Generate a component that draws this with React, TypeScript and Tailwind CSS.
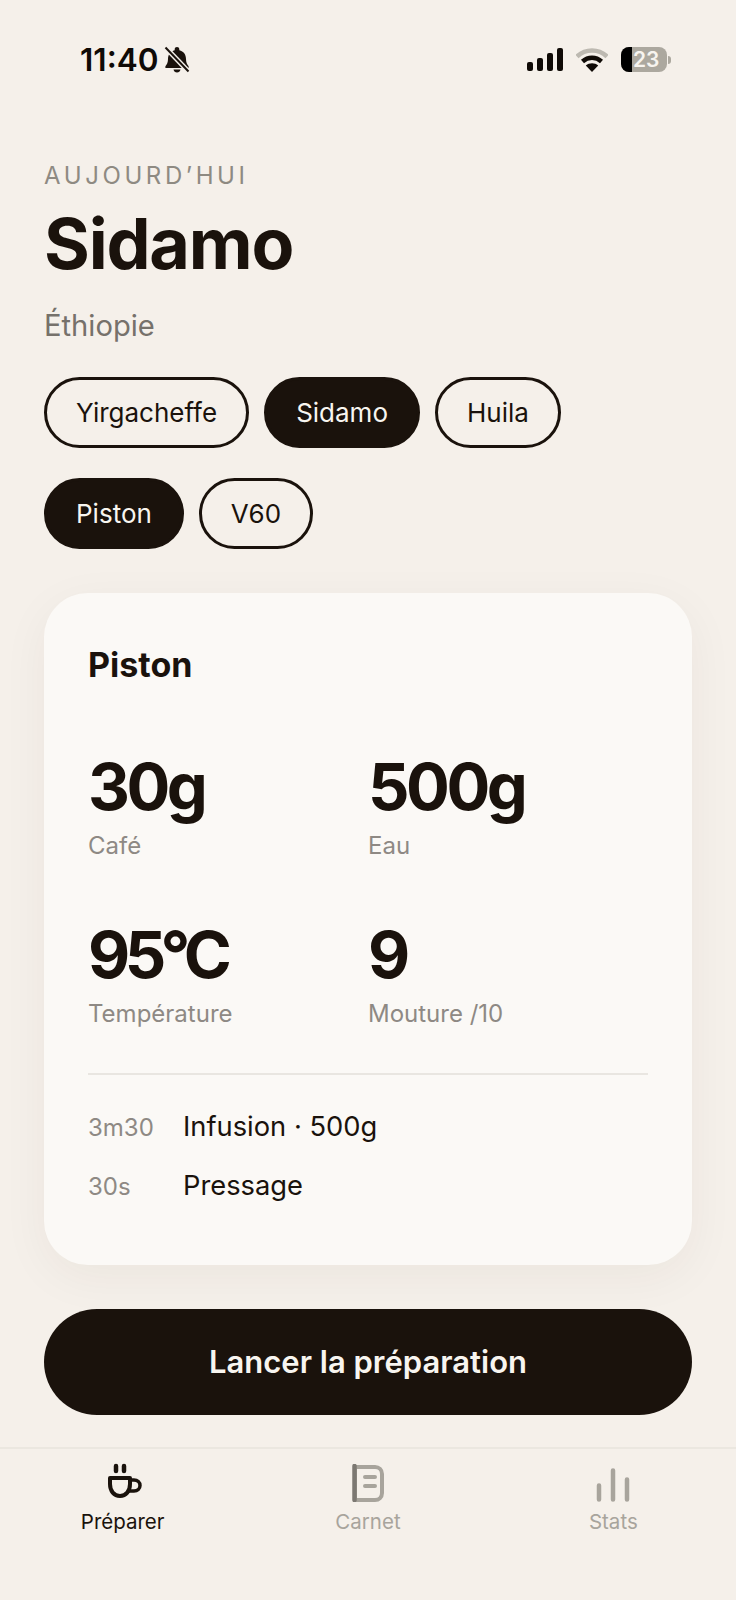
import React from "react";

const inter = "font-['Inter',sans-serif]";

function Bell() {
  return (
    <svg width="26" height="27" viewBox="0 0 26 27" className="ml-[6px]">
      <path d="M13 1c1.300 0 2.300 .9 2.300 2.200v1C19.600 5.300 22 8.500 22 13c0 3.500 1 5.500 2.600 7.200V22H1.400v-1.800C3 18.500 4 16.500 4 13c0-4.500 2.400-7.700 6.700-8.800v-1C10.700 1.900 11.700 1 13 1z" fill="#1a120c" />
      <path d="M9.500 23.500h7c-.4 1.800-1.700 3-3.500 3s-3.100-1.200-3.500-3z" fill="#1a120c" />
      <path d="M1.500 1.500 24.500 25.500" stroke="#f5f0ea" strokeWidth="5" />
      <path d="M1.500 1.500 24.500 25.500" stroke="#1a120c" strokeWidth="2" />
    </svg>
  );
}

function Signal() {
  return (
    <svg width="36" height="24" viewBox="0 0 36 24">
      <rect x="0" y="14" width="6" height="9" rx="2" fill="#0f0a06" />
      <rect x="10" y="10" width="6" height="13" rx="2" fill="#0f0a06" />
      <rect x="20" y="5" width="6" height="18" rx="2" fill="#0f0a06" />
      <rect x="30" y="0" width="6" height="23" rx="2" fill="#0f0a06" />
    </svg>
  );
}

function Wifi() {
  return (
    <svg width="32" height="24" viewBox="0 0 32 24">
      <path d="M1 8.500C9.500 .5 22.500 .5 31 8.500" fill="none" stroke="#bdb9b1" strokeWidth="4.500" />
      <path d="M6.500 13.500c5.500-5 13.500-5 19 0" fill="none" stroke="#0f0a06" strokeWidth="4.500" />
      <path d="M16 24 9.800 17.500c3.500-3 9-3 12.400 0z" fill="#0f0a06" />
    </svg>
  );
}

function Battery() {
  return (
    <div className="relative flex h-[25px] w-[50px] items-center">
      <div className="flex h-[25px] w-[46px] overflow-hidden rounded-[8px] bg-[#aca89f]">
        <div className="h-full w-[11px] bg-black" />
      </div>
      <div className="ml-[1px] h-[8px] w-[3px] rounded-r-full bg-[#aca89f]" />
      <span className={`absolute left-[12px] top-0 text-[21px] font-semibold leading-[25px] text-[#f7f4ef] ${inter}`}>23</span>
    </div>
  );
}

function Pill({ label, active }: { label: string; active?: boolean }) {
  return (
    <div
      className={`flex h-[71px] items-center rounded-full border-[3px] border-[#1a120c] px-[29px] text-[26px] ${
        active ? "bg-[#1a120c] text-[#f8f5f0]" : "text-[#1a120c]"
      }`}
    >
      {label}
    </div>
  );
}

function Stat({ value, label, tight }: { value: string; label: string; tight?: boolean }) {
  return (
    <div className="flex flex-col">
      <div
        className={`h-[80px] text-[65px] font-bold leading-[80px] text-[#1a120c] ${
          tight ? "tracking-[-5.500px]" : "tracking-[-3.500px]"
        }`}
      >
        {value}
      </div>
      <div className="mt-[3px] h-[32px] text-[24px] leading-[32px] text-[#8e8984]">{label}</div>
    </div>
  );
}

function Step({ time, text }: { time: string; text: string }) {
  return (
    <div className="flex h-[59px] items-center">
      <div className="w-[95px] text-[24px] text-[#8e8984]">{time}</div>
      <div className="text-[27.300px] text-[#1a120c]">{text}</div>
    </div>
  );
}

function CoffeeIcon() {
  return (
    <svg width="36" height="36" viewBox="0 0 36 36" fill="none" stroke="#1a120c" className="ml-[4px] mt-[-1px]">
      <path d="M9 3v5M17 3v5" strokeWidth="4.500" strokeLinecap="round" />
      <path d="M3 15h20v6c0 7-4 12-10 12S3 28 3 21z" strokeWidth="4" strokeLinejoin="round" />
      <path d="M23 17h4c3.500 0 6 2.300 6 5.500S30.500 28 27 28h-5" strokeWidth="3.500" />
    </svg>
  );
}

function BookIcon() {
  return (
    <svg width="32" height="38" viewBox="0 0 32 38" fill="none">
      <path d="M3 3h20c4 0 7 3 7 7v19c0 4-3 7-7 7H3z" stroke="#a8a49c" strokeWidth="4" />
      <path d="M2.500 2v34" stroke="#7c7872" strokeWidth="4.500" strokeLinecap="round" />
      <path d="M13 13h10M13 22h10" stroke="#a8a49c" strokeWidth="4" strokeLinecap="round" />
    </svg>
  );
}

function StatsIcon() {
  return (
    <svg width="34" height="38" viewBox="0 0 34 38" fill="none" stroke="#a8a49c" strokeWidth="4.500" strokeLinecap="round">
      <path d="M3 21.500V35.500M17 6.500V35.500M31 15.500V35.500" />
    </svg>
  );
}

function NavItem({ icon, label, active }: { icon: React.ReactNode; label: string; active?: boolean }) {
  return (
    <div className="flex flex-1 flex-col items-center">
      <div className="flex h-[38px] items-start justify-center">{icon}</div>
      <div className={`mt-[5px] text-[20.500px] leading-[30px] ${active ? "text-[#1a120c]" : "text-[#a8a49c]"}`}>{label}</div>
    </div>
  );
}

export default function App() {
  return (
    <div className={`flex h-[1600px] w-[736px] flex-col overflow-hidden bg-[#f5f0ea] ${inter}`}>
      <div className="flex h-[120px] items-center justify-between pb-[1px] pl-[80px] pr-[65px]">
        <div className="flex items-center">
          <span className="text-[31.500px] font-semibold leading-none text-[#0f0a06]">11:40</span>
          <Bell />
        </div>
        <div className="flex items-center gap-[13px]">
          <Signal />
          <Wifi />
          <Battery />
        </div>
      </div>

      <div className="flex flex-col px-[44px]">
        <div className="mt-[41px] text-[24px] leading-[30px] tracking-[0.15em] text-[#8e8a82]">AUJOURD’HUI</div>
        <h1 className="mt-[11px] text-[70px] font-bold leading-[84px] tracking-[-1.200px] text-[#1a120c]">Sidamo</h1>
        <div className="mt-[20px] text-[29.200px] leading-[40px] text-[#76716b]">Éthiopie</div>

        <div className="mt-[31px] flex gap-[15px]">
          <Pill label="Yirgacheffe" />
          <Pill label="Sidamo" active />
          <Pill label="Huila" />
        </div>
        <div className="mt-[30px] flex gap-[15px]">
          <Pill label="Piston" active />
          <Pill label="V60" />
        </div>

        <div className="mt-[44px] flex h-[672px] flex-col rounded-[44px] bg-[#fbf9f6] px-[44px] pt-[51px] shadow-[0_12px_48px_rgba(60,40,20,0.05)]">
          <div className="h-[42px] text-[34px] font-bold leading-[42px] text-[#1a120c]">Piston</div>
          <div className="mt-[61px] grid grid-cols-2 gap-y-[53px]">
            <Stat value="30g" label="Café" />
            <Stat value="500g" label="Eau" />
            <Stat value="95°C" label="Température" tight />
            <Stat value="9" label="Mouture /10" />
          </div>
          <div className="mt-[43px] h-[2px] bg-[#e9e6e1]" />
          <div className="mt-[23px] flex flex-col">
            <Step time="3m30" text="Infusion · 500g" />
            <Step time="30s" text="Pressage" />
          </div>
        </div>

        <div className="mt-[44px] flex h-[106px] items-center justify-center rounded-full bg-[#1a120c] text-[31px] font-semibold text-[#f8f5f0]">
          Lancer la préparation
        </div>
      </div>

      <div className="mt-[32px] flex border-t-2 border-[#ebe7e0] pt-[15px]">
        <NavItem icon={<CoffeeIcon />} label="Préparer" active />
        <NavItem icon={<BookIcon />} label="Carnet" />
        <NavItem icon={<StatsIcon />} label="Stats" />
      </div>
    </div>
  );
}
